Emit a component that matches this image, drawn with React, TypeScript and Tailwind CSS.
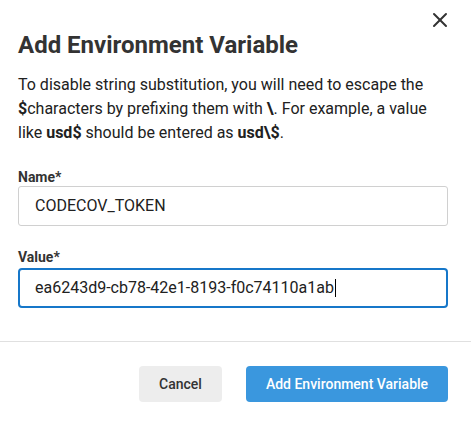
import { X } from "lucide-react";

const font = { fontFamily: "Roboto, 'Liberation Sans', sans-serif" };

export default function App() {
  return (
    <div
      style={font}
      className="relative flex h-[423px] w-[471px] flex-col overflow-hidden bg-white text-[#212121]"
    >
      <button
        type="button"
        className="absolute left-[428px] top-[8px] text-[#333]"
        aria-label="Close"
      >
        <X size={24} strokeWidth={2} />
      </button>

      <div className="pl-[18px] pr-[23px] pt-[29px]">
        <h2 className="text-[24px] font-bold leading-[32px] text-[#333]">
          Add Environment Variable
        </h2>
        <p className="mt-[12px] text-[16px] leading-[24px]">
          To disable string substitution, you will need to escape the{" "}
          <b>$</b>characters by prefixing them with <b>\</b>. For example, a
          value like <b>usd$</b> should be entered as <b>usd\$</b>.
        </p>

        <label className="mt-[23px] block text-[14px] font-bold leading-[18px] text-[#333]">
          Name*
        </label>
        <div className="flex h-10 items-center rounded-[3px] border border-[#d0d0d0] px-4 text-[16px]">
          CODECOV_TOKEN
        </div>

        <label className="mt-[22px] mb-[2px] block text-[14px] font-bold leading-[18px] text-[#333]">
          Value*
        </label>
        <div className="flex h-10 items-center rounded-[4px] border-2 border-[#1677c9] px-[15px] text-[16px]">
          ea6243d9-cb78-42e1-8193-f0c74110a1ab
          <span className="ml-px h-[18px] w-px bg-black" />
        </div>
      </div>

      <div className="mt-[33px] h-px w-full bg-[#e0e0e0]" />

      <div className="flex justify-end gap-6 pr-[23px] pt-[24px]">
        <button
          type="button"
          className="h-9 w-[83px] rounded-[4px] bg-[#ededed] text-[14px] font-medium text-[#333]"
        >
          Cancel
        </button>
        <button
          type="button"
          className="h-9 w-[202px] rounded-[4px] bg-[#3a97de] text-[14px] font-medium text-white"
        >
          Add Environment Variable
        </button>
      </div>
    </div>
  );
}
